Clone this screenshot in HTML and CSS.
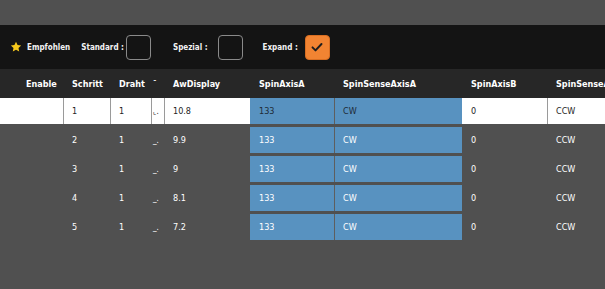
FILE: index.html
```html
<!DOCTYPE html>
<html lang="de">
<head>
    <meta charset="UTF-8">
    <title>Schritte</title>
    <link rel="stylesheet" href="styles.css">
</head>
<body>
    <div class="top-space"></div>

    <div class="toolbar">
        <svg class="star" viewBox="0 0 24 24" width="12" height="12">
            <path d="M12 1.5l3.1 6.6 7.2.9-5.3 5 1.4 7.1L12 17.6l-6.4 3.5 1.4-7.1-5.3-5 7.2-.9z" fill="#f6c81c"/>
        </svg>
        <span class="label first">Empfohlen</span>
        <span class="label standard">Standard :</span>
        <span class="check"></span>
        <span class="label spezial">Spezial :</span>
        <span class="check"></span>
        <span class="label">Expand :</span>
        <span class="check on">
            <svg viewBox="0 0 24 24" width="18" height="18">
                <path d="M6 12.5l4 4 8-8.5" fill="none" stroke="#1e1e1e" stroke-width="2.6" stroke-linecap="round" stroke-linejoin="round"/>
            </svg>
        </span>
    </div>

    <div class="table">
        <div class="row head">
            <div class="cell enable">Enable</div>
            <div class="cell">Schritt</div>
            <div class="cell">Draht</div>
            <div class="cell tiny">ˉ</div>
            <div class="cell">AwDisplay</div>
            <div class="cell">SpinAxisA</div>
            <div class="cell">SpinSenseAxisA</div>
            <div class="cell">SpinAxisB</div>
            <div class="cell">SpinSenseAxisB</div>
        </div>

        <div class="row selected">
            <div class="cell"></div>
            <div class="cell line">1</div>
            <div class="cell line">1</div>
            <div class="cell line tiny">⌞.</div>
            <div class="cell line">10.8</div>
            <div class="cell blue">133</div>
            <div class="cell blue split">CW</div>
            <div class="cell">0</div>
            <div class="cell line">CCW</div>
        </div>

        <div class="row">
            <div class="cell"></div>
            <div class="cell">2</div>
            <div class="cell">1</div>
            <div class="cell tiny">_.</div>
            <div class="cell">9.9</div>
            <div class="cell blue">133</div>
            <div class="cell blue split">CW</div>
            <div class="cell">0</div>
            <div class="cell">CCW</div>
        </div>

        <div class="row">
            <div class="cell"></div>
            <div class="cell">3</div>
            <div class="cell">1</div>
            <div class="cell tiny">_.</div>
            <div class="cell">9</div>
            <div class="cell blue">133</div>
            <div class="cell blue split">CW</div>
            <div class="cell">0</div>
            <div class="cell">CCW</div>
        </div>

        <div class="row">
            <div class="cell"></div>
            <div class="cell">4</div>
            <div class="cell">1</div>
            <div class="cell tiny">_.</div>
            <div class="cell">8.1</div>
            <div class="cell blue">133</div>
            <div class="cell blue split">CW</div>
            <div class="cell">0</div>
            <div class="cell">CCW</div>
        </div>

        <div class="row">
            <div class="cell"></div>
            <div class="cell">5</div>
            <div class="cell">1</div>
            <div class="cell tiny">_.</div>
            <div class="cell">7.2</div>
            <div class="cell blue">133</div>
            <div class="cell blue split">CW</div>
            <div class="cell">0</div>
            <div class="cell">CCW</div>
        </div>
    </div>
</body>
</html>
```

FILE: styles.css
```css
* {
    box-sizing: border-box;
    margin: 0;
    padding: 0;
}

body {
    font-family: 'DejaVu Sans Condensed', 'DejaVu Sans', sans-serif;
    background-color: #505050;
    color: #ffffff;
    overflow: hidden;
    width: 605px;
    height: 289px;
}

.top-space {
    height: 25px;
}

.toolbar {
    height: 44px;
    background-color: #141414;
    display: flex;
    align-items: center;
    padding-left: 10px;
    font-size: 8px;
    font-weight: bold;
}

.star {
    margin-right: 5px;
}

.label {
    margin-left: 20px;
    margin-right: 7px;
    color: #f2f2f2;
}

.label.first {
    margin: 0;
}

.label.standard {
    margin-left: 11px;
    margin-right: 2px;
}

.label.spezial {
    margin-left: 22px;
    margin-right: 10px;
}

.check {
    width: 25px;
    height: 25px;
    border: 1.5px solid #8a8a8a;
    border-radius: 4px;
    display: flex;
    align-items: center;
    justify-content: center;
}

.check.on {
    background-color: #f28432;
    border-color: #d86e22;
}

.table {
    display: flex;
    flex-direction: column;
    gap: 3px;
}

.row {
    display: grid;
    grid-template-columns: 63px 47px 41px 13px 86px 84px 128px 85px 110px;
    height: 26px;
    font-size: 9px;
}

.row.head {
    height: 29px;
    margin-bottom: -3px;
    background-color: #272727;
    font-weight: bold;
}

.cell {
    padding-left: 8px;
    display: flex;
    align-items: center;
    white-space: nowrap;
    overflow: hidden;
    border-left: 1px solid transparent;
}

.head .cell.enable {
    padding-left: 25px;
}

.cell.tiny {
    padding-left: 1px;
    font-size: 8px;
}

.head .cell.tiny {
    align-items: flex-start;
    padding-top: 11px;
}

.selected .cell {
    background-color: #ffffff;
    color: #1e1e1e;
}

.selected .cell.line {
    border-left-color: #9a9a9a;
}

.cell.blue {
    background-color: #5892c0;
}

.selected .cell.blue {
    background-color: #5892c0;
    color: #1e2a36;
}

.cell.blue.split {
    border-left-color: #5e5e5e;
}
```
